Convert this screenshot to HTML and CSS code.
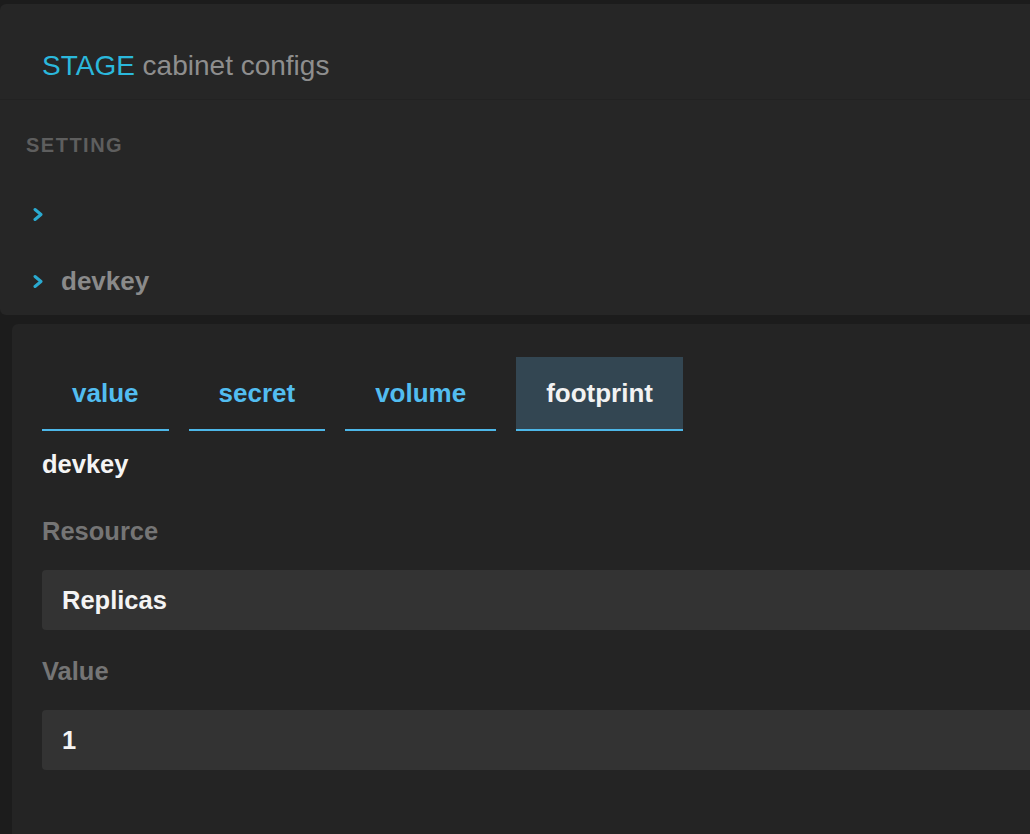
FILE: index.html
```html
<!DOCTYPE html>
<html lang="en">

<head>
    <meta charset="UTF-8">
    <meta name="viewport" content="width=device-width, initial-scale=1.0">
    <title>STAGE cabinet configs</title>
    <link rel="stylesheet" href="styles.css">
</head>

<body>
    <div class="config-panel">
        <div class="panel-head">
            <h1 class="panel-title"><span class="env">STAGE</span> cabinet configs</h1>
        </div>

        <div class="setting-list">
            <div class="section-label">SETTING</div>
            <div class="setting-row">
                <svg class="chevron" viewBox="0 0 10 14"><polyline points="2,2 8,7 2,12" /></svg>
                <span class="setting-name"></span>
            </div>
            <div class="setting-row">
                <svg class="chevron" viewBox="0 0 10 14"><polyline points="2,2 8,7 2,12" /></svg>
                <span class="setting-name">devkey</span>
            </div>
        </div>
    </div>

    <div class="detail-panel">
        <div class="tabs">
            <div class="tab">value</div>
            <div class="tab">secret</div>
            <div class="tab">volume</div>
            <div class="tab active">footprint</div>
        </div>

        <div class="key-name">devkey</div>

        <div class="field">
            <div class="field-label">Resource</div>
            <div class="field-box">Replicas</div>
        </div>

        <div class="field">
            <div class="field-label">Value</div>
            <div class="field-box">1</div>
        </div>
    </div>
</body>

</html>
```

FILE: styles.css
```css
html,
body {
    overflow: hidden;
}

body {
    margin: 0;
    padding-top: 4px;
    height: 830px;
    background-color: #1c1c1c;
    font-family: "Liberation Sans", Arial, sans-serif;
}

/* top card: title + setting list */
.config-panel {
    background-color: #262626;
    border-radius: 6px 0 0 6px;
    margin-right: -20px;
}

.panel-head {
    height: 96px;
    box-sizing: border-box;
    padding: 46px 42px 0;
    border-bottom: 1px solid #222;
}

.panel-title {
    margin: 0;
    font-size: 28px;
    font-weight: normal;
    line-height: 32px;
    color: #8e8e8e;
}

.env {
    color: #2bb8dc;
}

.setting-list {
    padding: 34px 26px 0;
}

.section-label {
    font-size: 20px;
    font-weight: bold;
    letter-spacing: 1.5px;
    line-height: 22px;
    margin-bottom: 25px;
    color: #5e5e5e;
}

.setting-row {
    display: flex;
    align-items: center;
    gap: 18px;
    height: 67px;
    padding-left: 7px;
}

.chevron {
    width: 10px;
    height: 15px;
    fill: none;
    stroke: #2aaad0;
    stroke-width: 3;
    stroke-linecap: round;
    stroke-linejoin: round;
}

.setting-name {
    font-size: 26px;
    font-weight: bold;
    color: #8a8a8a;
}

/* lower card: tabs + form */
.detail-panel {
    margin: 9px -20px 0 12px;
    padding: 33px 0 0 30px;
    height: 511px;
    box-sizing: border-box;
    background-color: #242424;
    border-radius: 6px 0 0 0;
}

.tabs {
    display: flex;
    gap: 20px;
}

.tab {
    height: 74px;
    box-sizing: border-box;
    padding: 0 30px;
    display: flex;
    align-items: center;
    font-size: 26px;
    font-weight: bold;
    color: #52bdf0;
    border-bottom: 2px solid #4db7e8;
}

.tab.active {
    background-color: #334652;
    color: #f2f2f2;
}

.key-name {
    margin-top: 19px;
    font-size: 25.5px;
    font-weight: bold;
    color: #f4f4f4;
}

.field {
    margin-top: 38px;
}

.field + .field {
    margin-top: 27px;
}

.field-label {
    font-size: 25.5px;
    font-weight: bold;
    color: #757575;
}

.field-box {
    margin-top: 24px;
    height: 60px;
    box-sizing: border-box;
    padding: 0 20px;
    display: flex;
    align-items: center;
    background-color: #333;
    border-radius: 4px;
    font-size: 25.5px;
    font-weight: bold;
    color: #f4f4f4;
}
```
